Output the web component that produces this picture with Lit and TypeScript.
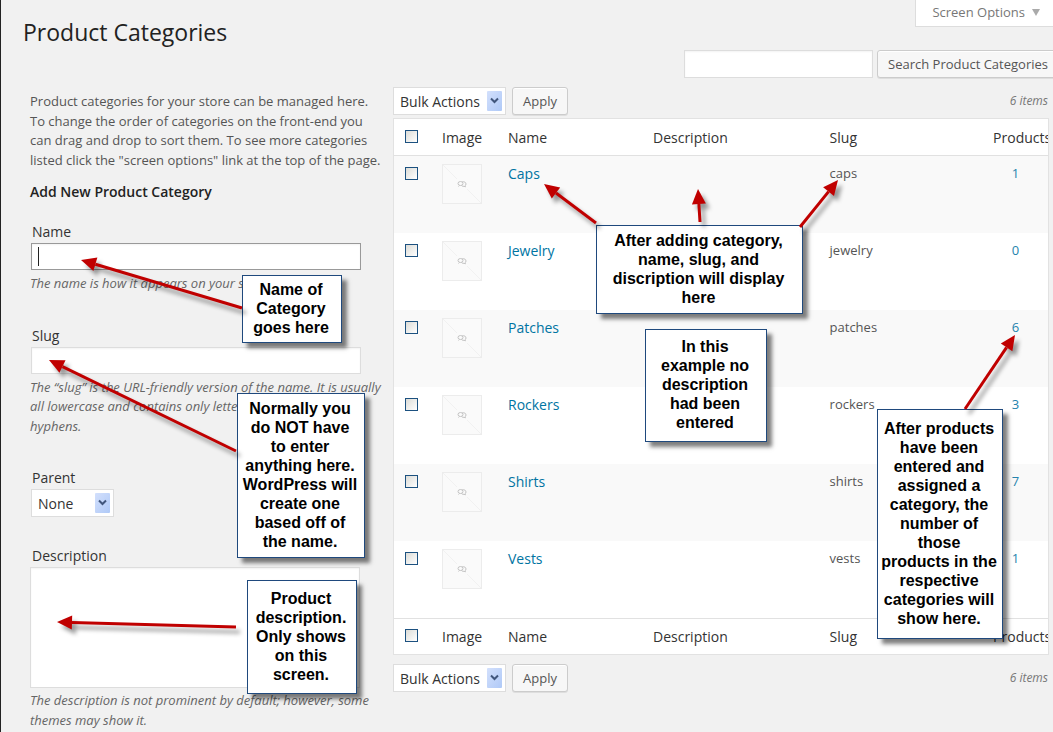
import { LitElement, html, css, svg } from "lit";
import { customElement } from "lit/decorators.js";

interface Category {
  name: string;
  slug: string;
  products: number;
}

const categories: Category[] = [
  { name: "Caps", slug: "caps", products: 1 },
  { name: "Jewelry", slug: "jewelry", products: 0 },
  { name: "Patches", slug: "patches", products: 6 },
  { name: "Rockers", slug: "rockers", products: 3 },
  { name: "Shirts", slug: "shirts", products: 7 },
  { name: "Vests", slug: "vests", products: 1 },
];

const notes = [
  { place: "note-name", text: "Name of\nCategory\ngoes here" },
  {
    place: "note-slug",
    text: "Normally you\ndo NOT have\nto enter\nanything here.\nWordPress will\ncreate one\nbased off of\nthe name.",
  },
  { place: "note-text", text: "Product\ndescription.\nOnly shows\non this\nscreen." },
  { place: "note-table", text: "After adding category,\nname, slug, and\ndiscription will display\nhere" },
  { place: "note-empty", text: "In this\nexample no\ndescription\nhad been\nentered" },
  {
    place: "note-count",
    text: "After products\nhave been\nentered and\nassigned a\ncategory, the\nnumber of\nthose\nproducts in the\nrespective\ncategories will\nshow here.",
  },
];

// Each arrow runs from its tail to its tip: x1, y1, x2, y2.
const arrows = [
  [242, 308, 81, 260],
  [236, 451, 49, 360],
  [236, 627, 57, 622],
  [596, 223, 544, 184],
  [700, 222, 698, 189],
  [800, 227, 838, 180],
  [965, 409, 1015, 335],
];

function arrow([x1, y1, x2, y2]: number[]) {
  const len = Math.hypot(x2 - x1, y2 - y1);
  const ux = (x2 - x1) / len;
  const uy = (y2 - y1) / len;
  const bx = x2 - ux * 15;
  const by = y2 - uy * 15;
  const head = [
    [x2, y2],
    [bx - uy * 7, by + ux * 7],
    [bx + uy * 7, by - ux * 7],
  ];
  return svg`<line x1=${x1} y1=${y1} x2=${bx} y2=${by} stroke="#c00000" stroke-width="3"></line>
    <polygon points=${head.map((p) => p.join(",")).join(" ")} fill="#c00000"></polygon>`;
}

@customElement("drop-down")
export class DropDown extends LitElement {
  static properties = { label: {}, option: {} };
  declare label: string;
  declare option: string;

  static styles = css`
    :host {
      display: inline-flex;
      position: relative;
    }
    .box {
      appearance: none;
      box-sizing: border-box;
      height: 28px;
      margin: 0;
      padding: 0 25px 0 6px;
      border: 1px solid #ddd;
      border-radius: 0;
      background: #fff;
      color: #333;
      font: 14px "Open Sans", sans-serif;
    }
    .wide {
      padding-right: 39px;
    }
    .arrow {
      position: absolute;
      top: 4px;
      right: 4px;
      pointer-events: none;
    }
  `;

  render() {
    return html`
      <select class="box ${this.option === "None" ? "wide" : ""}" aria-label=${this.label}>
        <option>${this.option}</option>
      </select>
      <svg class="arrow" width="15" height="20" viewBox="0 0 15 20">
        <defs>
          <linearGradient id="g" x1="0" y1="0" x2="1" y2="1">
            <stop offset="0" stop-color="#d3e0fc"></stop>
            <stop offset="1" stop-color="#afc9f7"></stop>
          </linearGradient>
        </defs>
        <rect width="15" height="20" rx="1" fill="url(#g)"></rect>
        <path d="M4 7.5l3.5 3.5L11 7.5" fill="none" stroke="#41567c" stroke-width="2"></path>
      </svg>
    `;
  }
}

@customElement("app-root")
export class AppRoot extends LitElement {
  static styles = css`
    :host {
      display: block;
      font: 13px/1.5 "Open Sans", sans-serif;
      color: #555;
    }
    .page {
      position: relative;
      overflow: hidden;
      min-height: 100vh;
      box-sizing: border-box;
      background: #f1f1f1;
      border-left: 1px solid #222;
    }
    .marker {
      position: absolute;
      left: -1px;
      top: 236px;
      width: 1px;
      height: 14px;
      border-top: 10px solid #0074a2;
      border-bottom: 10px solid #0074a2;
      background: #f1f1f1;
    }
    .top {
      display: flex;
      justify-content: space-between;
      align-items: flex-start;
      height: 50px;
      padding-left: 22px;
    }
    h1 {
      margin: 17px 0 0;
      font-size: 23px;
      font-weight: 400;
      line-height: 30px;
      color: #222;
    }
    .options {
      box-sizing: border-box;
      display: flex;
      align-items: center;
      gap: 7px;
      height: 27px;
      padding: 0 13px 1px 16px;
      border: 1px solid #ddd;
      border-width: 0 0 1px 1px;
      background: #fff;
      color: #777;
      font: inherit;
    }
    .search {
      display: flex;
      justify-content: flex-end;
      gap: 4px;
      margin-right: -6px;
    }
    .button {
      box-sizing: border-box;
      height: 28px;
      padding: 0 10px 1px;
      border: 1px solid #ccc;
      border-radius: 3px;
      background: #f7f7f7;
      box-shadow: inset 0 1px 0 #fff, 0 1px 0 rgba(0, 0, 0, 0.08);
      color: #555;
      font: 13px "Open Sans", sans-serif;
      white-space: nowrap;
    }
    .field {
      box-sizing: border-box;
      display: block;
      margin: 0;
      padding: 3px 5px;
      border: 1px solid #ddd;
      border-radius: 0;
      background: #fff;
      box-shadow: inset 0 1px 2px rgba(0, 0, 0, 0.05);
      font: 14px "Open Sans", sans-serif;
      color: #333;
    }
    .query {
      width: 189px;
      height: 28px;
    }
    .columns {
      display: grid;
      grid-template-columns: 352px minmax(0, 1fr);
      gap: 11px;
      padding: 9px 4px 0 29px;
    }
    .form {
      padding-top: 5px;
    }
    .form p {
      margin: 0;
    }
    h2 {
      margin: 12px 0 20px;
      font-size: 14px;
      font-weight: 600;
      line-height: 20px;
      color: #222;
    }
    .group {
      margin-bottom: 32px;
    }
    label {
      display: block;
      width: max-content;
      margin: 0 0 1px 2px;
      font-size: 14px;
      line-height: 20px;
      color: #333;
    }
    .entry {
      position: relative;
      margin: 0 21px 4px 1px;
    }
    .entry .field {
      width: 100%;
      height: 27px;
    }
    .entry .focused {
      border-color: #999;
    }
    .caret {
      position: absolute;
      left: 7px;
      top: 4px;
      width: 1px;
      height: 19px;
      background: #222;
    }
    .area {
      width: 330px;
      max-width: 100%;
      height: 121px;
      margin-bottom: 3px;
      resize: none;
    }
    .form .hint {
      font-style: italic;
      color: #666;
    }
    .parent {
      margin: 0 0 29px 1px;
    }
    .parent label {
      margin-left: 1px;
    }
    .nav {
      display: flex;
      align-items: center;
      gap: 6px;
      height: 28px;
    }
    .count {
      margin: 0 1px 0 auto;
      font-size: 12px;
      font-style: italic;
      color: #777;
    }
    .frame {
      margin: 3px 0 9px;
      overflow: hidden;
      border: 1px solid #e2e2e2;
      background: #fff;
    }
    table {
      width: 100%;
      table-layout: fixed;
      border-collapse: separate;
      border-spacing: 0;
    }
    th,
    td {
      box-sizing: border-box;
      padding: 8px 0 0 10px;
      text-align: left;
      vertical-align: top;
      font-weight: 400;
    }
    th {
      height: 36px;
      padding: 0 0 0 10px;
      vertical-align: middle;
      font-size: 14px;
      color: #333;
      white-space: nowrap;
    }
    thead th {
      border-bottom: 1px solid #e1e1e1;
      height: 37px;
    }
    tfoot th {
      border-top: 1px solid #e1e1e1;
    }
    tbody tr {
      height: 77px;
    }
    tbody tr:nth-child(odd) {
      background: #f9f9f9;
    }
    .c-check {
      width: 38px;
    }
    .c-image {
      width: 66px;
    }
    .c-name {
      width: 145px;
    }
    .c-desc {
      width: 27%;
    }
    .c-slug {
      width: 25%;
    }
    .tick {
      appearance: none;
      display: block;
      width: 13px;
      height: 13px;
      margin: 0 0 2px 1px;
      border: 1px solid #1c5180;
      background: linear-gradient(135deg, #dcdcd7, #fff);
    }
    td .tick {
      margin-top: 3px;
    }
    .thumb {
      display: block;
    }
    a {
      color: #0074a2;
      text-decoration: none;
    }
    .name {
      font-size: 14px;
      line-height: 20px;
    }
    .num {
      padding-right: 10px;
      text-align: center;
    }
    .num a {
      color: #2583ad;
    }
    .arrows {
      position: absolute;
      top: 0;
      left: -1px;
      pointer-events: none;
      filter: drop-shadow(4px 5px 2px rgba(0, 0, 0, 0.4));
    }
    .note {
      position: absolute;
      box-sizing: border-box;
      display: flex;
      align-items: center;
      justify-content: center;
      padding: 0 2px 2px 0;
      border: 1px solid #1f497d;
      background: #fff;
      box-shadow: 5px 5px 4px rgba(0, 0, 0, 0.5);
      color: #000;
      font: bold 16px/19px "Liberation Sans", sans-serif;
      text-align: center;
      white-space: pre;
    }
    .note-name {
      left: 241px;
      top: 275px;
      width: 100px;
      height: 68px;
    }
    .note-slug {
      left: 236px;
      top: 393px;
      width: 128px;
      height: 165px;
    }
    .note-text {
      left: 246px;
      top: 580px;
      width: 110px;
      height: 114px;
    }
    .note-table {
      left: 595px;
      top: 225px;
      width: 207px;
      height: 89px;
    }
    .note-empty {
      left: 644px;
      top: 329px;
      width: 122px;
      height: 113px;
    }
    .note-count {
      left: 876px;
      top: 409px;
      width: 126px;
      height: 230px;
    }
  `;

  private headings() {
    return html`<tr>
      <th class="c-check"><input class="tick" type="checkbox" aria-label="Select all" /></th>
      <th class="c-image">Image</th>
      <th class="c-name">Name</th>
      <th class="c-desc">Description</th>
      <th class="c-slug">Slug</th>
      <th>Products</th>
    </tr>`;
  }

  private nav() {
    return html`<div class="nav">
      <drop-down label="Bulk Actions" option="Bulk Actions"></drop-down>
      <button class="button" type="button">Apply</button>
      <span class="count">6 items</span>
    </div>`;
  }

  private row(c: Category) {
    return html`<tr>
      <td><input class="tick" type="checkbox" aria-label="Select ${c.name}" /></td>
      <td>
        <svg class="thumb" width="40" height="40" viewBox="0 0 40 40" fill="none">
          <rect x=".5" y=".5" width="39" height="39" fill="#fafafa" stroke="#ececec"></rect>
          <path d="M1 1l14 14M25 25l14 14" stroke="#f1f1f1"></path>
          <ellipse cx="18.5" cy="19.500" rx="2.500" ry="2" stroke="#c4c4c4"></ellipse>
          <path d="M20 18c2.500-.8 4 .5 4 2 0 1-.5 1.500-1 1.800l.5 1-1.500-.5c-1.500.2-2.500-.3-2.500-1.300M17.500 21.500l-1 1" stroke="#c4c4c4"></path>
        </svg>
      </td>
      <td class="name"><a href="#${c.slug}">${c.name}</a></td>
      <td></td>
      <td>${c.slug}</td>
      <td class="num"><a href="#${c.slug}-products">${c.products}</a></td>
    </tr>`;
  }

  render() {
    return html`
      <div class="page">
        <span class="marker"></span>
        <header class="top">
          <h1>Product Categories</h1>
          <button class="options" type="button">
            Screen Options
            <svg width="8" height="7" viewBox="0 0 8 7"><path d="M0 0h8L4 7z" fill="#aaa"></path></svg>
          </button>
        </header>
        <div class="search">
          <input class="field query" type="text" aria-label="Search Product Categories" />
          <button class="button" type="button">Search Product Categories</button>
        </div>
        <main class="columns">
          <form class="form">
            <p>
              Product categories for your store can be managed here. To change the order of categories on the
              front-end you can drag and drop to sort them. To see more categories listed click the "screen
              options" link at the top of the page.
            </p>
            <h2>Add New Product Category</h2>
            <div class="group">
              <label for="name">Name</label>
              <div class="entry">
                <input class="field focused" id="name" type="text" />
                <span class="caret"></span>
              </div>
              <p class="hint">The name is how it appears on your site.</p>
            </div>
            <div class="group">
              <label for="slug">Slug</label>
              <div class="entry"><input class="field" id="slug" type="text" /></div>
              <p class="hint">
                The “slug” is the URL-friendly version of the name. It is usually all lowercase and contains only
                letters, numbers, and hyphens.
              </p>
            </div>
            <div class="parent">
              <label>Parent</label>
              <drop-down label="Parent" option="None"></drop-down>
            </div>
            <label for="description">Description</label>
            <textarea class="field area" id="description"></textarea>
            <p class="hint">The description is not prominent by default; however, some themes may show it.</p>
          </form>
          <section>
            ${this.nav()}
            <div class="frame">
              <table>
                <thead>
                  ${this.headings()}
                </thead>
                <tbody>
                  ${categories.map((c) => this.row(c))}
                </tbody>
                <tfoot>
                  ${this.headings()}
                </tfoot>
              </table>
            </div>
            ${this.nav()}
          </section>
        </main>
        ${notes.map((n) => html`<div class="note ${n.place}">${n.text}</div>`)}
        <svg class="arrows" width="1053" height="732">${arrows.map(arrow)}</svg>
      </div>
    `;
  }
}
